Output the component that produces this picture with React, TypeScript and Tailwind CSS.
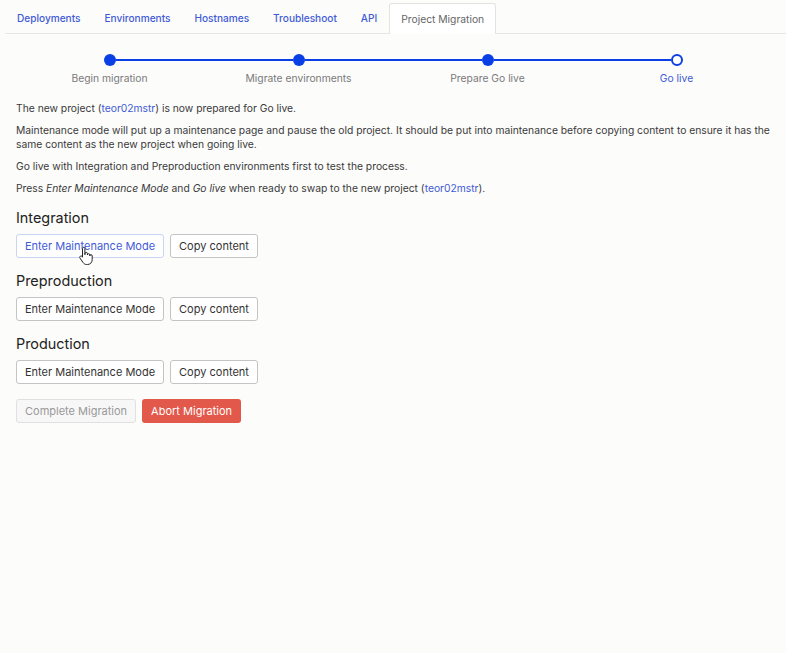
import { useState } from "react";

const tabs = ["Deployments", "Environments", "Hostnames", "Troubleshoot", "API", "Project Migration"];

const steps = [
  { label: "Begin migration", done: true },
  { label: "Migrate environments", done: true },
  { label: "Prepare Go live", done: true },
  { label: "Go live", done: false },
];

const envs = ["Integration", "Preproduction", "Production"];

function Stepper() {
  return (
    <div className="mx-[15px] mt-[20px] grid grid-cols-4">
      {steps.map((step, i) => (
        <div key={step.label} className="flex flex-col items-center">
          <div className="flex h-3 w-full items-center">
            <div className={`h-[2px] flex-1 ${i === 0 ? "" : "bg-[#0a3fe6]"}`} />
            {step.done ? (
              <div className="h-3 w-3 shrink-0 rounded-full bg-[#0a3fe6]" />
            ) : (
              <div className="h-3 w-3 shrink-0 rounded-full border-2 border-[#0a3fe6] bg-white" />
            )}
            <div className={`h-[2px] flex-1 ${i === steps.length - 1 ? "" : "bg-[#0a3fe6]"}`} />
          </div>
          <span
            className={`mt-[5px] text-[10.3px] leading-[14px] ${step.done ? "text-[#7a7a7a]" : "text-[#3f5bd8]"}`}
          >
            {step.label}
          </span>
        </div>
      ))}
    </div>
  );
}

// mouse pointer hovering the first button in the screenshot
function HandCursor() {
  return (
    <svg
      className="pointer-events-none absolute left-[61px] top-[11px] h-[21px] w-[16px]"
      viewBox="0 0 16 20"
    >
      <path
        d="M4.5 2a1.2 1.2 0 0 1 2.4 0v6.2l.1-1.2a1.2 1.2 0 0 1 2.4.2v1.2a1.2 1.2 0 0 1 2.4 0v1a1.2 1.2 0 0 1 2.4 0V13c0 3-2 5-4.8 5H8.6c-1.6 0-2.6-.7-3.5-1.9L2 11.6c-.5-.7-.3-1.5.3-1.9.6-.4 1.3-.2 1.8.4l.4.6Z"
        fill="#fff"
        stroke="#222"
        strokeWidth="1"
        strokeLinejoin="round"
      />
    </svg>
  );
}

function Button({ children, hover }: { children: string; hover?: boolean }) {
  return (
    <button
      className={`relative h-6 rounded-[3px] border bg-white px-[8px] text-[11px] leading-none ${
        hover ? "border-[#c9d3f2] text-[#3f5bd8]" : "border-[#c4c4c4] text-[#333]"
      }`}
    >
      {children}
      {hover && <HandCursor />}
    </button>
  );
}

export default function App() {
  const [active] = useState("Project Migration");

  return (
    <div className="min-h-screen bg-[#fcfcfa] font-['Inter',sans-serif] text-[#333]">
      <div className="ml-[5px] flex h-[34px] items-end border-b border-[#e6e6e6] pt-[3px]">
        {tabs.map((tab) =>
          tab === active ? (
            <div
              key={tab}
              className="-mb-px flex h-[31px] items-center rounded-t-[3px] border border-b-0 border-[#e3e3e3] bg-white px-[11px] pt-[1px] text-[10.3px] text-[#666]"
            >
              {tab}
            </div>
          ) : (
            <div
              key={tab}
              className="flex h-[30px] items-center px-[12px] pt-[2px] text-[10.1px] font-medium text-[#3f5bd8]"
            >
              {tab}
            </div>
          ),
        )}
      </div>

      <Stepper />

      <div className="mt-[16px] px-4 text-[10.3px] leading-[14px] text-[#3a3a3a]">
        <p>
          The new project (<span className="text-[#3f5bd8]">teor02mstr</span>) is now prepared for Go live.
        </p>
        <p className="mt-2">
          Maintenance mode will put up a maintenance page and pause the old project. It should be put into maintenance
          before copying content to ensure it has the same content as the new project when going live.
        </p>
        <p className="mt-2">Go live with Integration and Preproduction environments first to test the process.</p>
        <p className="mt-2">
          Press <em>Enter Maintenance Mode</em> and <em>Go live</em> when ready to swap to the new project (
          <span className="text-[#3f5bd8]">teor02mstr</span>).
        </p>

        {envs.map((env, i) => (
          <div key={env} className="mt-[13px]">
            <h2 className="text-[14.4px] leading-5 text-[#222]">{env}</h2>
            <div className="mt-[6px] flex gap-[6px]">
              <Button hover={i === 0}>Enter Maintenance Mode</Button>
              <Button>Copy content</Button>
            </div>
          </div>
        ))}

        <div className="mt-[15px] flex gap-[6px]">
          <button className="h-6 rounded-[3px] border border-[#e0e0e0] bg-[#f7f7f7] px-[8px] text-[11px] text-[#999]">
            Complete Migration
          </button>
          <button className="h-6 rounded-[3px] bg-[#e2584a] px-[9px] text-[11px] text-white">Abort Migration</button>
        </div>
      </div>
    </div>
  );
}
